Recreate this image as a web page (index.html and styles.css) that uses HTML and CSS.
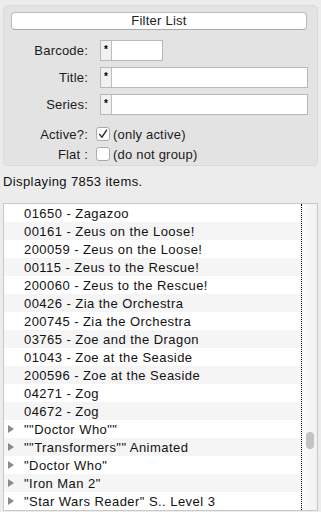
FILE: index.html
```html
<!DOCTYPE html>
<html>
<head>
<meta charset="utf-8">
<link rel="stylesheet" href="styles.css">
</head>
<body>
<div class="filter">
  <div class="filter-btn">Filter List</div>
  <div class="fields">
    <div class="field"><span class="lbl">Barcode:</span><div class="input short"><span class="pre">*</span><span class="val"></span></div></div>
    <div class="field"><span class="lbl">Title:</span><div class="input long"><span class="pre">*</span><span class="val"></span></div></div>
    <div class="field"><span class="lbl">Series:</span><div class="input long"><span class="pre">*</span><span class="val"></span></div></div>
  </div>
  <div class="checks">
    <div class="check-row"><span class="lbl lbl-check">Active?:</span><span class="box"><svg width="12" height="12" viewBox="0 0 12 12"><path d="M2.6 6.4 L5 9.2 L9.6 2.2" fill="none" stroke="#2a2a2a" stroke-width="1.4" stroke-linecap="round" stroke-linejoin="round"/></svg></span><span class="hint">(only active)</span></div>
    <div class="check-row"><span class="lbl lbl-check">Flat :</span><span class="box"></span><span class="hint">(do not group)</span></div>
  </div>
</div>
<div class="status">Displaying 7853 items.</div>
<div class="list">
  <div class="rows">
    <div class="row"><span class="disc"></span><span class="txt">01650 - Zagazoo</span></div>
    <div class="row"><span class="disc"></span><span class="txt">00161 - Zeus on the Loose!</span></div>
    <div class="row"><span class="disc"></span><span class="txt">200059 - Zeus on the Loose!</span></div>
    <div class="row"><span class="disc"></span><span class="txt">00115 - Zeus to the Rescue!</span></div>
    <div class="row"><span class="disc"></span><span class="txt">200060 - Zeus to the Rescue!</span></div>
    <div class="row"><span class="disc"></span><span class="txt">00426 - Zia the Orchestra</span></div>
    <div class="row"><span class="disc"></span><span class="txt">200745 - Zia the Orchestra</span></div>
    <div class="row"><span class="disc"></span><span class="txt">03765 - Zoe and the Dragon</span></div>
    <div class="row"><span class="disc"></span><span class="txt">01043 - Zoe at the Seaside</span></div>
    <div class="row"><span class="disc"></span><span class="txt">200596 - Zoe at the Seaside</span></div>
    <div class="row"><span class="disc"></span><span class="txt">04271 - Zog</span></div>
    <div class="row"><span class="disc"></span><span class="txt">04672 - Zog</span></div>
    <div class="row"><span class="disc"><i class="tri"></i></span><span class="txt">""Doctor Who""</span></div>
    <div class="row"><span class="disc"><i class="tri"></i></span><span class="txt">""Transformers"" Animated</span></div>
    <div class="row"><span class="disc"><i class="tri"></i></span><span class="txt">"Doctor Who"</span></div>
    <div class="row"><span class="disc"><i class="tri"></i></span><span class="txt">"Iron Man 2"</span></div>
    <div class="row"><span class="disc"><i class="tri"></i></span><span class="txt">"Star Wars Reader" S.. Level 3</span></div>
  </div>
  <div class="sep"></div>
  <div class="track"><div class="thumb"></div></div>
</div>
</body>
</html>
```

FILE: styles.css
```css
html, body {
  margin: 0;
  padding: 0;
}
body {
  background: #ececec;
  font-family: "Liberation Sans", Arial, sans-serif;
  font-size: 13px;
  color: #1b1b1b;
  padding-top: 5px;
}
.filter {
  margin: 0 3px;
  border: 1px solid #dadada;
  border-radius: 5px;
  background: #e3e3e3;
  padding: 6px 0 1px 0;
}
.filter-btn {
  margin-left: 7px;
  width: 296px;
  height: 18px;
  box-sizing: border-box;
  border: 1px solid #bbbbbb;
  border-bottom-color: #a9a9a9;
  border-radius: 4px;
  background: #ffffff;
  text-align: center;
  line-height: 16px;
  letter-spacing: 0.25px;
  color: #222;
}
.fields {
  margin-top: 10px;
  display: flex;
  flex-direction: column;
  gap: 6px;
}
.field {
  display: flex;
  align-items: center;
  height: 21px;
}
.lbl {
  width: 84px;
  flex: none;
  text-align: right;
  margin-right: 12px;
  letter-spacing: 0.2px;
}
.input {
  display: flex;
  height: 21px;
  box-sizing: border-box;
  border: 1px solid #b7b7b7;
  background: #fff;
}
.short { width: 63px; }
.long { width: 208px; }
.pre {
  width: 10px;
  flex: none;
  border-right: 1px solid #bdbdbd;
  background: #f1f1f1;
  font-size: 10px;
  font-weight: bold;
  text-align: center;
  line-height: 17px;
  color: #000;
}
.checks {
  margin-top: 9px;
  display: flex;
  flex-direction: column;
}
.check-row {
  display: flex;
  align-items: center;
  height: 20px;
}
.lbl-check {
  margin-right: 8px;
}
.box {
  width: 14px;
  height: 14px;
  box-sizing: border-box;
  border: 1px solid #ababab;
  border-radius: 3px;
  background: #fff;
  margin-right: 3px;
  display: flex;
  align-items: center;
  justify-content: center;
  flex: none;
}
.hint {
  letter-spacing: 0.2px;
}
.status {
  margin: 7px 0 0 3px;
  height: 18px;
  line-height: 18px;
  letter-spacing: 0.4px;
  color: #111;
}
.list {
  margin: 12px 3px 0;
  border: 1px solid #c8c8c8;
  display: flex;
  background: #fff;
}
.rows {
  flex: 1;
  display: flex;
  flex-direction: column;
}
.row {
  height: 18px;
  display: flex;
  align-items: center;
  letter-spacing: 0.45px;
  color: #111;
}
.row:nth-child(even) {
  background: #f5f5f5;
}
.disc {
  width: 16px;
  padding-left: 4px;
  flex: none;
  display: flex;
  align-items: center;
}
.tri {
  display: block;
  width: 0;
  height: 0;
  border-left: 6px solid #8a8a8a;
  border-top: 4px solid transparent;
  border-bottom: 4px solid transparent;
}
.sep {
  width: 0;
  border-left: 1px dotted #000;
}
.track {
  width: 15px;
  flex: none;
  background: linear-gradient(to right, #fbfbfb, #f1f1f1);
}
.thumb {
  margin: 228px 0 0 4px;
  width: 8px;
  height: 17px;
  border-radius: 4px;
  background: #c2c2c2;
}
```
